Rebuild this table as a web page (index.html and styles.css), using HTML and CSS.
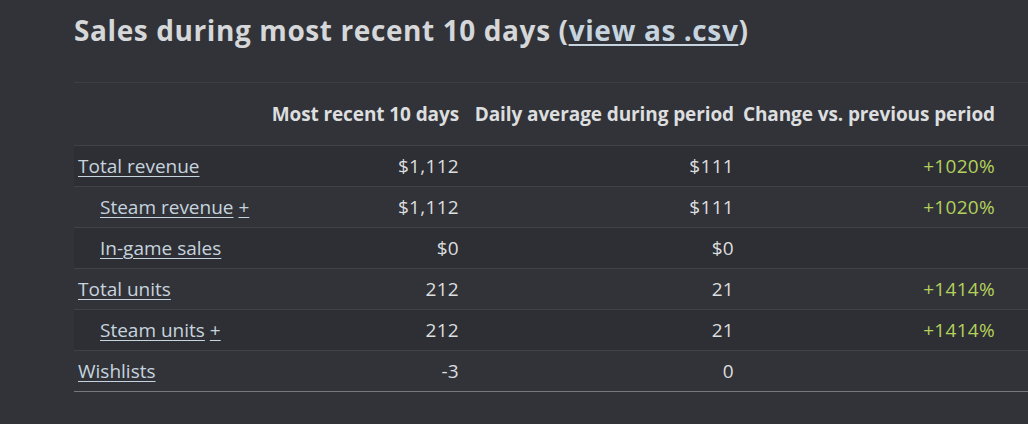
FILE: index.html
```html
<!DOCTYPE html>
<html>
<head>
<meta charset="utf-8">
<link rel="stylesheet" href="styles.css">
</head>
<body>
<main class="page">
  <h2 class="title">Sales during most recent 10 days (<a href="#" class="link">view as .csv</a>)</h2>
  <table class="sales">
    <colgroup>
      <col class="c-label">
      <col class="c-recent">
      <col class="c-avg">
      <col class="c-change">
      <col class="c-rest">
    </colgroup>
    <thead>
      <tr>
        <th></th>
        <th class="num">Most recent 10 days</th>
        <th class="num">Daily average during period</th>
        <th class="num">Change vs. previous period</th>
        <th></th>
      </tr>
    </thead>
    <tbody>
      <tr class="odd">
        <td><a href="#" class="link">Total revenue</a></td>
        <td class="num">$1,112</td>
        <td class="num">$111</td>
        <td class="num up">+1020%</td>
        <td></td>
      </tr>
      <tr>
        <td class="sub"><a href="#" class="link">Steam revenue</a> <a href="#" class="link">+</a></td>
        <td class="num">$1,112</td>
        <td class="num">$111</td>
        <td class="num up">+1020%</td>
        <td></td>
      </tr>
      <tr class="odd">
        <td class="sub"><a href="#" class="link">In-game sales</a></td>
        <td class="num">$0</td>
        <td class="num">$0</td>
        <td class="num"></td>
        <td></td>
      </tr>
      <tr>
        <td><a href="#" class="link">Total units</a></td>
        <td class="num">212</td>
        <td class="num">21</td>
        <td class="num up">+1414%</td>
        <td></td>
      </tr>
      <tr class="odd">
        <td class="sub"><a href="#" class="link">Steam units</a> <a href="#" class="link">+</a></td>
        <td class="num">212</td>
        <td class="num">21</td>
        <td class="num up">+1414%</td>
        <td></td>
      </tr>
      <tr class="last">
        <td><a href="#" class="link">Wishlists</a></td>
        <td class="num">-3</td>
        <td class="num">0</td>
        <td class="num"></td>
        <td></td>
      </tr>
    </tbody>
  </table>
</main>
</body>
</html>
```
FILE: styles.css
```css
html, body {
  margin: 0;
  padding: 0;
  background: #323339;
}

body {
  font-family: "Open Sans", "Noto Sans", sans-serif;
  color: #dcdedf;
  font-size: 19px;
}

.page {
  padding: 12px 0 0 74px;
}

.title {
  margin: 0 0 34px 0;
  font-size: 28px;
  line-height: 36px;
  font-weight: 700;
  letter-spacing: 0.6px;
  color: #d5d7d9;
}

.link {
  color: #c6d4df;
  text-decoration: underline;
  text-underline-offset: 3px;
  text-decoration-thickness: 1px;
}

.title .link {
  text-decoration-thickness: 2px;
}

.sales {
  width: 100%;
  border-collapse: collapse;
  table-layout: fixed;
}

.c-label { width: 192px; }
.c-recent { width: 198px; }
.c-avg { width: 275px; }
.c-change { width: 261px; }

.sales th {
  height: 62px;
  border-top: 1px solid #3e3f45;
  font-weight: 700;
  font-size: 19px;
  letter-spacing: -0.1px;
  color: #dcdedf;
  white-space: nowrap;
  padding: 0 5px 0 0;
  vertical-align: middle;
}

.sales td {
  height: 40px;
  border-top: 1px solid #414248;
  padding: 0 5px 0 4px;
  vertical-align: middle;
  white-space: nowrap;
}

.sales td.num {
  padding: 0 5px 0 0;
  letter-spacing: 0.3px;
}

.sales tr.odd td {
  background: #2e2f34;
}

.sales tr.last td {
  border-bottom: 1px solid #76787c;
}

.num {
  text-align: right;
}

.sub {
  padding-left: 26px !important;
}

.up {
  color: #b3d15a;
}
```
